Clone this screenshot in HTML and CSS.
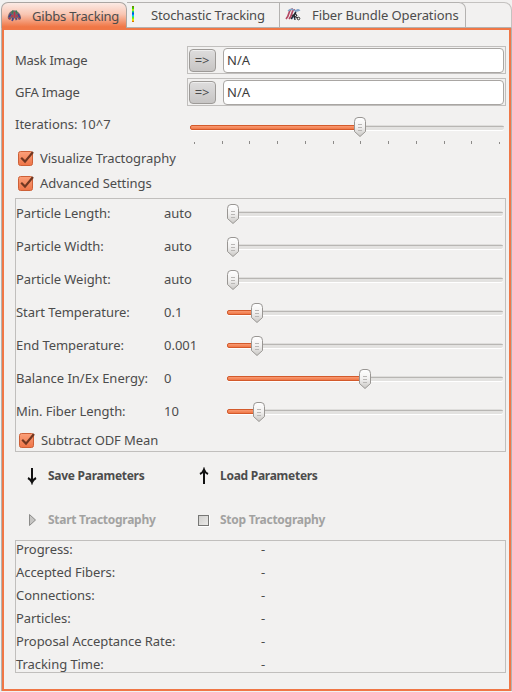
FILE: index.html
```html
<!DOCTYPE html>
<html lang="en">
<head>
<meta charset="utf-8">
<title>Gibbs Tracking</title>
<link rel="stylesheet" href="styles.css">
</head>
<body>
<svg width="0" height="0" class="defs">
  <defs>
    <linearGradient id="knobFill" x1="0" y1="0" x2="0" y2="1"><stop offset="0" stop-color="#fff"/><stop offset=".5" stop-color="#f1f0ef"/><stop offset="1" stop-color="#c9c7c4"/></linearGradient>
    <linearGradient id="checkFill" x1="0" y1="0" x2="0" y2="1"><stop offset="0" stop-color="#fba07a"/><stop offset="1" stop-color="#ee7447"/></linearGradient>
    <linearGradient id="greyFill" x1="0" y1="0" x2="1" y2="1"><stop offset="0" stop-color="#d0cfcd"/><stop offset="1" stop-color="#ecebe9"/></linearGradient>
    <symbol id="knob" viewBox="0 0 12 20">
      <path d="M4 .5h4Q11.5 .5 11.5 4.500V14.500L6 19.500L.5 14.500V4.500Q.5 .5 4 .5Z" fill="url(#knobFill)" stroke="#999693"/>
      <path d="M4 7.500h4M4 10.500h4M4 13.500h4" stroke="#b9b7b5"/>
    </symbol>
    <symbol id="check" viewBox="0 0 17 17">
      <rect x=".5" y="1.500" width="14" height="14" rx="2" fill="url(#checkFill)" stroke="#cd6037"/>
      <path d="M3.200 7.800L7 11.600L15 2" fill="none" stroke="#713721" stroke-width="2.200"/>
    </symbol>
  </defs>
</svg>
<div class="window">
  <nav class="tabs">
    <div class="tab active">
      <svg class="tab-icon" width="15" height="13" viewBox="0 0 15 13"><path d="M1 10Q0 6 3 3Q7-.5 11 3Q14 5 14 10L12 11L10 9L9 12L7.500 9L6 12L5 9L3 11Z" fill="#76666d"/><path d="M2 8l2-3M11 5l2 4M6 9l-1 3" stroke="#3f438e" stroke-width="1.500"/><path d="M6 1.500l-1 3M9 1.500l1 3" stroke="#378052" stroke-width="1.500"/><path d="M4 7h2M9 7h2M7.500 3v6M2 10l1-1M12 9l1 1" stroke="#bf3345" stroke-width="1.400"/><path d="M9 9l1 2" stroke="#4b338b"/></svg>
      <span>Gibbs Tracking</span>
    </div>
    <div class="tab second">
      <i class="rainbow"></i>
      <span>Stochastic Tracking</span>
    </div>
    <div class="tab third">
      <svg class="tab-icon" width="16" height="14" viewBox="0 0 16 14"><path d="M1 11Q3 9 4 5T8 1M4 11Q6 9 7 5T10 2" fill="none" stroke="#b44864" stroke-width="1.700"/><path d="M3 3Q6 0 9 2T15 2M7 11Q9 9 10 5T14 2" fill="none" stroke="#82a5c9" stroke-width="1.400"/><path d="M6 11L11 4M7 7l6 3M9 6l1 6M10 5l2 3" stroke="#25252c" stroke-width="1.300"/><circle cx="13.500" cy="10.500" r="1.300" fill="none" stroke="#333"/></svg>
      <span>Fiber Bundle Operations</span>
    </div>
    <div class="tab-rest"></div>
  </nav>
  <main class="panel">
    <div class="field-row"><label>Mask Image</label><div class="picker"><button>=&gt;</button><div class="input">N/A</div></div></div>
    <div class="field-row"><label>GFA Image</label><div class="picker"><button>=&gt;</button><div class="input">N/A</div></div></div>
    <div class="iterations">
      <label>Iterations: 10^7</label>
      <div class="scale">
        <div class="slider"><i class="fill" style="width:170px"></i><svg class="knob" style="left:164px"><use href="#knob"/></svg></div>
        <svg class="ticks" width="314" height="3"><path d="M4.500 1v2M32.500 0v3M59.500 0v3M87.500 0v3M115.500 0v3M143.500 0v3M170.500 0v3M198.500 0v3M226.500 0v3M254.500 0v3M281.500 0v3M309.500 1v2" stroke="#8d8b89"/></svg>
      </div>
    </div>
    <div class="check-row"><svg width="17" height="17"><use href="#check"/></svg><span>Visualize Tractography</span></div>
    <div class="check-row"><svg width="17" height="17"><use href="#check"/></svg><span>Advanced Settings</span></div>
    <section class="frame advanced">
      <div class="param"><span class="name">Particle Length:</span><span class="value">auto</span><div class="slider"><svg class="knob" style="left:0px"><use href="#knob"/></svg></div></div>
      <div class="param"><span class="name">Particle Width:</span><span class="value">auto</span><div class="slider"><svg class="knob" style="left:0px"><use href="#knob"/></svg></div></div>
      <div class="param"><span class="name">Particle Weight:</span><span class="value">auto</span><div class="slider"><svg class="knob" style="left:0px"><use href="#knob"/></svg></div></div>
      <div class="param"><span class="name">Start Temperature:</span><span class="value">0.1</span><div class="slider"><i class="fill" style="width:30px"></i><svg class="knob" style="left:24px"><use href="#knob"/></svg></div></div>
      <div class="param"><span class="name">End Temperature:</span><span class="value">0.001</span><div class="slider"><i class="fill" style="width:30px"></i><svg class="knob" style="left:24px"><use href="#knob"/></svg></div></div>
      <div class="param"><span class="name balance">Balance In/Ex Energy:</span><span class="value">0</span><div class="slider"><i class="fill" style="width:138px"></i><svg class="knob" style="left:132px"><use href="#knob"/></svg></div></div>
      <div class="param"><span class="name">Min. Fiber Length:</span><span class="value">10</span><div class="slider"><i class="fill" style="width:32px"></i><svg class="knob" style="left:26px"><use href="#knob"/></svg></div></div>
      <div class="check-row"><svg width="17" height="17"><use href="#check"/></svg><span>Subtract ODF Mean</span></div>
    </section>
    <div class="actions">
      <div class="action"><svg width="14" height="18" viewBox="0 0 14 18"><path d="M7 1V15M3 11Q6 12.500 7 15.500Q8 12.500 11 11" fill="none" stroke="#111" stroke-width="2"/></svg><span>Save Parameters</span></div>
      <div class="action"><svg width="14" height="18" viewBox="0 0 14 18"><path d="M7 17V3M3 7Q6 5.500 7 2.500Q8 5.500 11 7" fill="none" stroke="#111" stroke-width="2"/></svg><span>Load Parameters</span></div>
      <div class="action off"><svg width="14" height="18" viewBox="0 0 14 18"><path d="M4.500 3.500V14.500L10.500 9Z" fill="#c6c5c3" stroke="#8b8b89"/></svg><span>Start Tractography</span></div>
      <div class="action off"><svg width="14" height="18" viewBox="0 0 14 18"><path d="M1 15.500H12.500V4" fill="none" stroke="#fff"/><rect x="1.500" y="4.500" width="10" height="10" fill="url(#greyFill)" stroke="#777775"/></svg><span>Stop Tractography</span></div>
    </div>
    <section class="frame status">
      <div><span>Progress:</span><span>-</span></div>
      <div><span>Accepted Fibers:</span><span>-</span></div>
      <div><span>Connections:</span><span>-</span></div>
      <div><span>Particles:</span><span>-</span></div>
      <div><span>Proposal Acceptance Rate:</span><span>-</span></div>
      <div><span>Tracking Time:</span><span>-</span></div>
    </section>
  </main>
</div>
</body>
</html>
```
FILE: styles.css
```css
* { box-sizing: border-box; }
body { margin: 0; background: #f2f1f0; color: #4c4c4c; font: 13px/18px "Noto Sans", sans-serif; overflow: hidden; }
span, label { white-space: nowrap; letter-spacing: -.06px; }
.defs { position: absolute; }
.window { width: 512px; height: 691px; padding: 2px 0 0 1px; }
.tabs { display: flex; height: 26px; }
.tab { display: flex; align-items: center; border-top: 1px solid #b4b2b0; border-bottom: 1px solid #b4b2b0; }
.tab.active { width: 126px; padding-left: 5px; gap: 10px; border: 1px solid #aaa5a1; border-bottom: 0; border-radius: 7px 7px 0 0; background: linear-gradient(#fbeae4, #f9c6b3 45%, #f07746 95%); }
.tab.active span { letter-spacing: -.2px; }
.tab.second { width: 153px; border-right: 1px solid #b4b2b0; padding-left: 5px; }
.tab.second span { letter-spacing: -.15px; }
.tab.third { width: 186px; padding-left: 5px; gap: 11px; border-right: 1px solid #b4b2b0; border-top-right-radius: 7px; }
.tab.third span { letter-spacing: -.1px; }
.tab-rest { flex: 1; border: 1px solid #c4c2c0; border-left: 0; border-bottom-color: #b4b2b0; border-top-right-radius: 8px; margin-left: -5px; }
.rainbow { width: 2px; height: 16px; margin: -2px 17px 0 0; background: linear-gradient(#7b7b00, #2fd400 15%, #e8f000 25%, #00d47b 35%, #0044f0 48%, #00cfef 60%, #62ed00 75%, #fff000 88%, #c84a00); }
.panel { height: 663px; border: 2px solid #f07746; outline: 1px solid #b4b2b0; clip-path: inset(0 -1px -1px -1px); margin: 0 1px; padding: 16px 3px 0 11px; }
.field-row { display: flex; height: 28px; margin-bottom: 4px; align-items: center; justify-content: space-between; }
.field-row label { letter-spacing: -.25px; }
.picker { display: flex; width: 319px; height: 28px; padding: 1px; border: 1px solid #c1bfbd; align-items: center; }
.picker button { width: 27px; height: 23px; margin: 0 7px 0 0; padding: 0 1px 0 0; border: 1px solid #9d9a97; border-radius: 4px; background: linear-gradient(#dedddd, #c7c5c4); color: #4c4c4c; font: 13px/18px "Noto Sans", sans-serif; letter-spacing: -.3px; box-shadow: inset 0 1px #eee; }
.input { width: 281px; height: 25px; padding-left: 3px; border: 1px solid #a9a6a3; border-radius: 4px; background: #fff; line-height: 23px; color: #3c3c3c; }
.iterations { display: flex; justify-content: space-between; height: 36px; padding: 5px 2px 0 0; }
.iterations label { letter-spacing: 0; }
.scale { width: 314px; padding-top: 10px; }
.slider { position: relative; height: 5px; border-radius: 3px; background: linear-gradient(#dfdedc 1px, #b8b6b3 1px, #b8b6b3 2px, #e3e2e0 2px); box-shadow: 0 1px #fff; }
.fill { position: absolute; left: 0; top: 0; height: 5px; border: 1px solid #d35a2b; border-radius: 2px; background: linear-gradient(#f99b73, #f07746); }
.knob { position: absolute; top: -8px; width: 12px; height: 20px; }
.param .knob { top: -7px; }
.ticks { display: block; margin-top: 11px; }
.check-row { display: flex; align-items: center; height: 25px; padding-left: 3px; gap: 5px; }
.check-row span { margin-top: -2px; }
.frame { border: 1px solid #c1bfbd; width: 491px; }
.advanced { height: 254px; margin-top: 2px; }
.param { display: flex; align-items: center; height: 33px; position: relative; top: -2px; }
.param span { margin-top: -2px; }
.name { width: 148px; }
.name.balance { letter-spacing: 0; }
.value { width: 63px; letter-spacing: 0; }
.param .slider { width: 276px; }
.advanced .check-row { height: 22px; margin-top: -1px; }
.advanced .check-row span { margin-top: 0; letter-spacing: -.1px; }
.actions { display: grid; grid-template-columns: 172px 172px; grid-template-rows: 44px 43px; padding-left: 10px; margin-top: 2px; }
.action { display: flex; align-items: center; gap: 9px; font-weight: 700; font-size: 12px; }
.action span { letter-spacing: -.27px; }
.off { color: #a2a2a1; }
.status { height: 133px; margin-top: -1px; }
.status div { display: flex; height: 23px; align-items: center; position: relative; top: -4px; }
.status div span:first-child { width: 245px; }
```
